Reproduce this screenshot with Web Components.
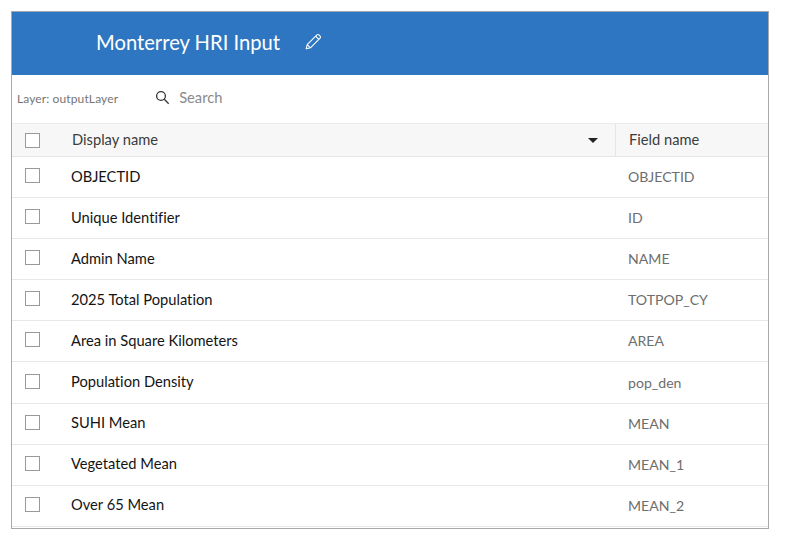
<!DOCTYPE html>
<html><head><meta charset="utf-8"><style>
html,body{margin:0;background:#fff}
body{padding:11px 18px 0 11px;font-family:Lato,sans-serif;font-variant-ligatures:none}
</style></head><body>
<field-panel>
<panel-header>Monterrey HRI Input</panel-header>
<panel-search layer="Layer: outputLayer"></panel-search>
<table-head></table-head>
<field-row name="OBJECTID" field="OBJECTID"></field-row>
<field-row name="Unique Identifier" field="ID"></field-row>
<field-row name="Admin Name" field="NAME"></field-row>
<field-row name="2025 Total Population" field="TOTPOP_CY"></field-row>
<field-row name="Area in Square Kilometers" field="AREA"></field-row>
<field-row name="Population Density" field="pop_den"></field-row>
<field-row name="SUHI Mean" field="MEAN"></field-row>
<field-row name="Vegetated Mean" field="MEAN_1"></field-row>
<field-row name="Over 65 Mean" field="MEAN_2"></field-row>
</field-panel>
<script>
function def(name, css, html){
  customElements.define(name, class extends HTMLElement{
    connectedCallback(){
      if(this.shadowRoot) return;
      const r=this.attachShadow({mode:'open'});
      r.innerHTML='<style>'+css+'</style>'+(typeof html==='function'?html(this):html);
    }
  });
}
const box='.cb{width:13px;height:13px;border:1px solid #999;background:#fff;display:block;box-sizing:content-box;flex:none}';
def('field-panel',':host{display:block;width:756px;height:516px;border:1px solid #a9a9a9;border-top-color:#a0a8b4;overflow:hidden}','<slot></slot>');
def('panel-header',':host{display:flex;align-items:center;height:63px;padding:0 0 4px 84px;background:#2e76c1;color:#fff;font-size:20.2px;box-sizing:border-box}svg{margin:0 0 0 24px;display:block}',
 '<slot></slot><svg width="18" height="18" viewBox="0 0 18 18" fill="none" stroke="#fff" stroke-width="1.1" stroke-linejoin="round"><path d="M2.2 15.8l1-4.2L12.9 1.9a1.4 1.4 0 0 1 2 0l1.2 1.2a1.4 1.4 0 0 1 0 2l-9.7 9.7z"/><path d="M3.2 11.6l3.2 3.2M11.6 3.2l3.2 3.2"/></svg>');
def('panel-search',':host{display:flex;align-items:center;height:48px;padding:0 0 4px 5px;box-sizing:border-box;font-size:12px;color:#757575}.s{display:flex;align-items:center;margin-left:37px;font-size:14.7px;color:#8a8a8a;gap:9px}svg{display:block}.l{position:relative;top:1px;letter-spacing:.12px}',
 h=>`<span class="l">${h.getAttribute('layer')}</span><span class="s"><svg width="15" height="15" viewBox="0 0 15 15" fill="none" stroke="#333" stroke-width="1.3"><circle cx="6" cy="6" r="4.4"/><path d="M9.3 9.3l4.4 4.4"/></svg>Search</span>`);
def('table-head',box+':host{display:flex;height:32px;background:#f7f7f7;border-top:1px solid #ececec;border-bottom:1px solid #e6e6e6;box-sizing:content-box;font-size:14.7px;color:#3c3c3c;align-items:stretch}.a{width:603px;display:flex;align-items:center;padding-left:13px;box-sizing:border-box}.n{margin:0 0 2px 32px;flex:1}.c{width:0;height:0;border:5px solid transparent;border-top:5px solid #222;border-bottom:0;margin-right:17px}.b{flex:1;border-left:1px solid #e6e6e6;display:flex;align-items:center;padding:0 0 2px 13px;box-sizing:border-box}',
 '<div class="a"><span class="cb"></span><span class="n">Display name</span><span class="c"></span></div><div class="b">Field name</div>');
def('field-row',box+':host{display:flex;align-items:center;height:41.1px;box-sizing:border-box;border-bottom:1px solid #e8e8e8;padding-bottom:3px;font-size:14.7px;color:#141414}.cb{margin-left:13px}.n{margin-left:31px;width:557px}.f{color:#6e6e6e;font-size:14.1px;margin-top:2px}',
 h=>`<span class="cb"></span><span class="n">${h.getAttribute('name')}</span><span class="f">${h.getAttribute('field')}</span>`);
</script>
</body></html>
